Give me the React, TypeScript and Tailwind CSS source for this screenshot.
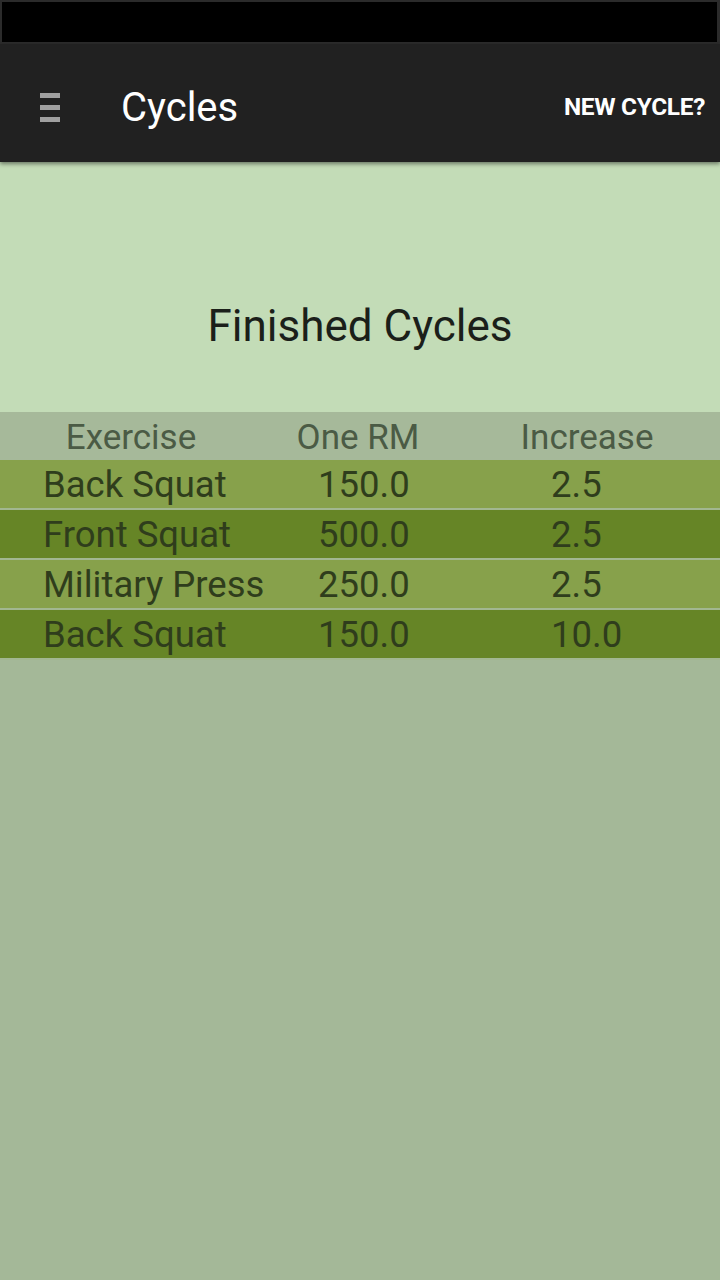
import React from "react";

const rows = [
  { name: "Back Squat", rm: "150.0", inc: "2.5", dark: false },
  { name: "Front Squat", rm: "500.0", inc: "2.5", dark: true },
  { name: "Military Press", rm: "250.0", inc: "2.5", dark: false },
  { name: "Back Squat", rm: "150.0", inc: "10.0", dark: true },
];

export default function App() {
  return (
    <div
      className="w-[720px] h-[1280px] flex flex-col bg-[#a4b898] overflow-hidden"
      style={{ fontFamily: "Roboto, 'Liberation Sans', sans-serif" }}
    >
      <div className="h-[44px] bg-black border-2 border-[#2b2b2b] border-r-[3px] shrink-0" />
      <div className="relative z-10 h-[118px] bg-[#212121] flex items-center shrink-0 shadow-[0_2px_4px_rgba(0,0,0,0.45)]">
        <div className="ml-[40px] w-[20px] flex flex-col gap-[7px] mt-[8px]">
          <div className="h-[5px] bg-[#a0a0a0]" />
          <div className="h-[5px] bg-[#a0a0a0]" />
          <div className="h-[5px] bg-[#a0a0a0]" />
        </div>
        <div className="ml-[61px] text-[40px] leading-none text-white mt-[10px]">Cycles</div>
        <div className="ml-auto mr-[15px] text-[24.4px] font-bold text-white leading-none tracking-[-0.3px] mt-[8px]">
          NEW CYCLE?
        </div>
      </div>
      <div className="h-[250px] bg-[#c3dcb7] flex items-center justify-center shrink-0">
        <div className="text-[44px] leading-none text-[#1b1f1a] mt-[78px]">Finished Cycles</div>
      </div>
      <div className="h-[48px] bg-[#a6b99a] flex items-center text-[35px] leading-none text-[#4b5b45] shrink-0 pt-[3px]">
        <div className="w-[262px] text-center">Exercise</div>
        <div className="w-[192px] text-center">One RM</div>
        <div className="flex-1 text-center">Increase</div>
      </div>
      {rows.map((r, i) => (
        <div
          key={i}
          className={
            "h-[50px] flex items-center border-b-2 border-[#a2b791] text-[36.5px] leading-none text-[#2f3d1c] shrink-0 pt-[3px] " +
            (r.dark ? "bg-[#668526]" : "bg-[#87a14b]")
          }
        >
          <div className="w-[262px] pl-[43px] whitespace-nowrap">{r.name}</div>
          <div className="w-[192px] pl-[56px]">{r.rm}</div>
          <div className="flex-1 pl-[97px]">{r.inc}</div>
        </div>
      ))}
      <div className="flex-1" />
    </div>
  );
}
